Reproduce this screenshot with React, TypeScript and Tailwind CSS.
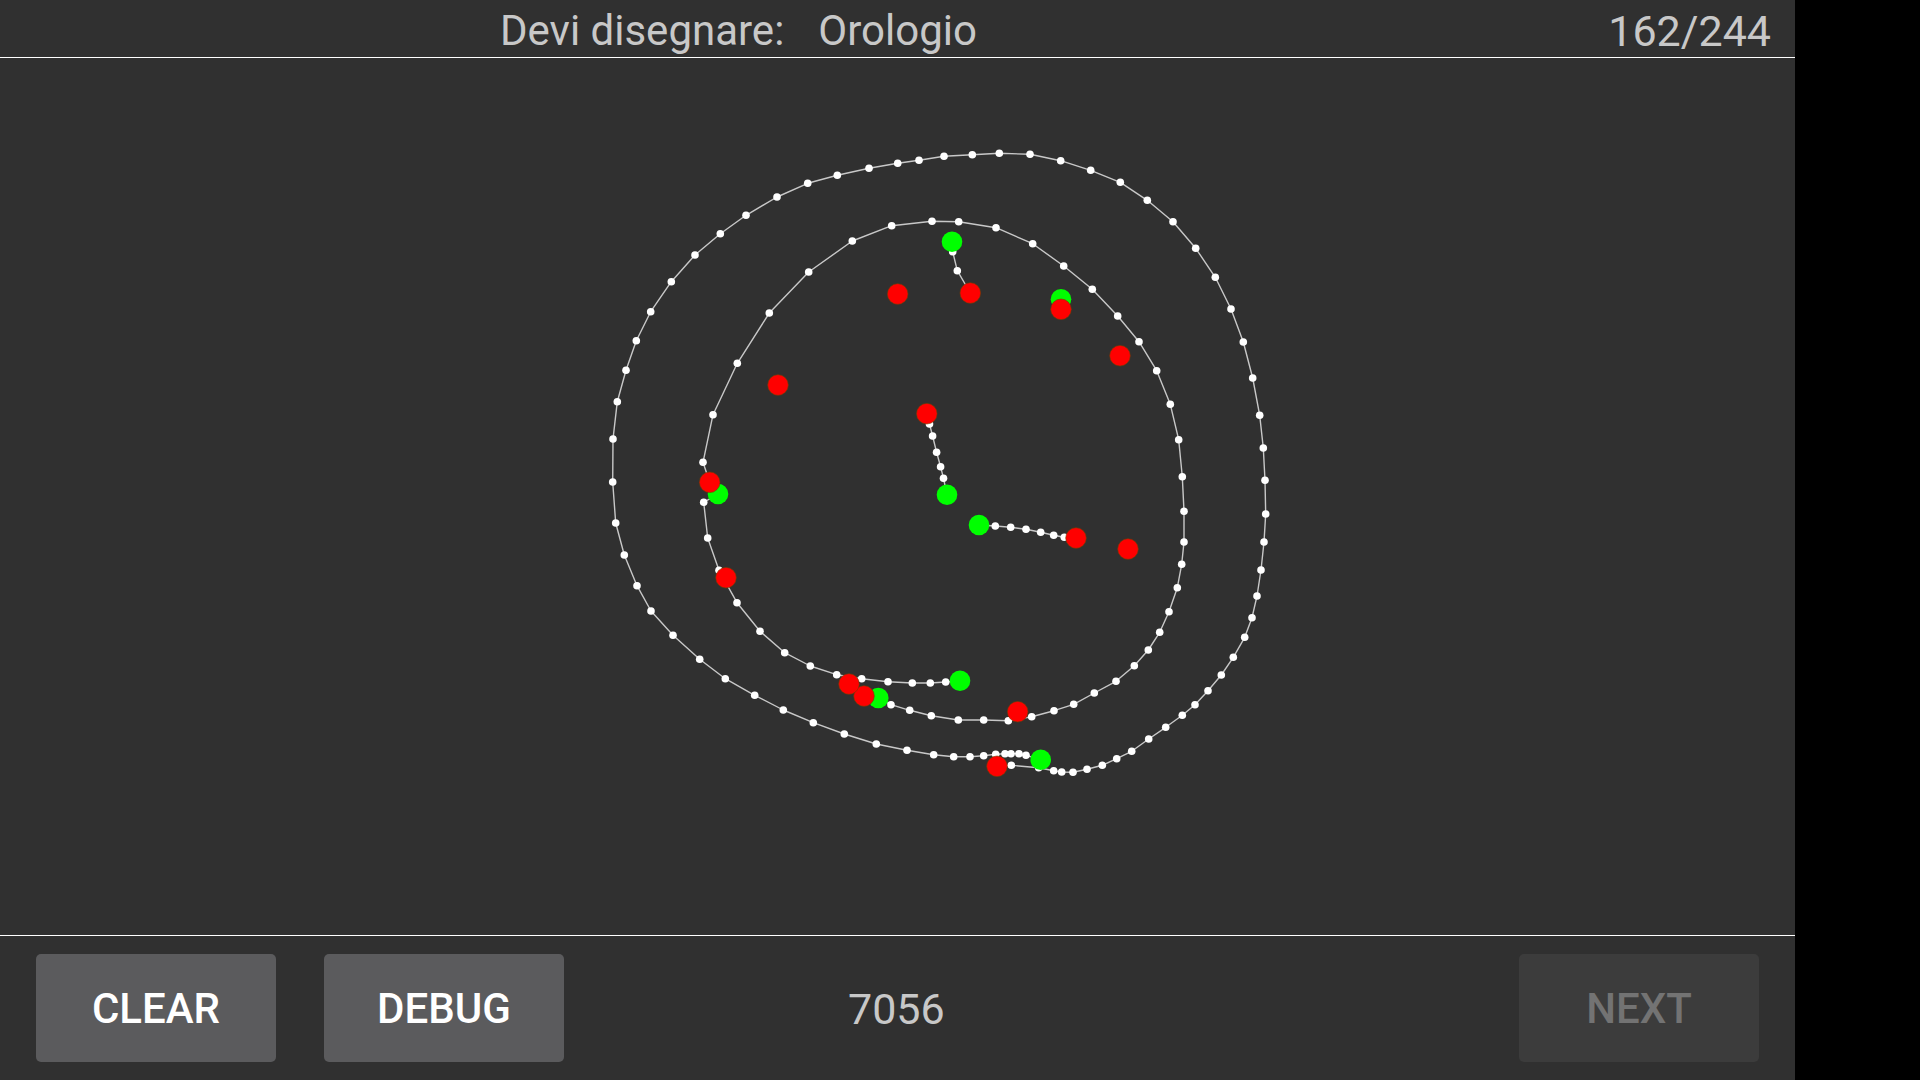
type Pt = [number, number]

// tracciati disegnati dall'utente, coordinate in pixel della pagina
const outer: Pt[] = [
  [1040.7, 759.7], [1026, 755.3], [1019, 753.7], [1011, 753.7], [1005, 753.7], [995.7, 754.3],
  [983.7, 755.7], [970, 756.7], [953.7, 756.7], [933.7, 754.7], [907, 750.3], [876.3, 744],
  [844.3, 734], [813.3, 722.7], [783.3, 710], [754.7, 695.3], [725.3, 678.7], [699.7, 659.3],
  [673, 635.3], [651, 611], [637, 585.7], [624.3, 555], [615.7, 523], [612.7, 482], [613, 439],
  [617.3, 401.7], [626, 370.3], [636.3, 340.7], [650.7, 311.7], [671.3, 281.7], [695, 255],
  [720.3, 233.7], [746, 215.3], [777, 197], [807.7, 183.3], [837.3, 175.3], [869, 168.3],
  [897.7, 163.3], [919, 160.3], [944, 156.3], [972.3, 154.7], [999.3, 153.3], [1030, 154.3],
  [1060.7, 160.7], [1090.7, 170.3], [1120.3, 182.3], [1147.3, 200.3], [1173, 221.7],
  [1195.7, 248.3], [1215.3, 277.3], [1231, 309], [1243.3, 342], [1252.7, 378], [1259.7, 415.3],
  [1263.3, 448], [1265, 480.3], [1265.7, 514], [1264, 542], [1261, 570], [1257, 596],
  [1252, 617.7], [1244.7, 637.3], [1233.3, 657.3], [1221.3, 675], [1208, 690.7], [1195, 704.7],
  [1182.3, 715.3], [1165.7, 727.3], [1148.7, 739], [1131.7, 751.3], [1116.7, 758.7],
  [1102.3, 765.3], [1087, 769.3], [1073, 772.3], [1061.7, 772], [1053.7, 770.7], [1038.7, 767.7],
  [1011.3, 765.3], [997, 766.3],
]

const innerA: Pt[] = [
  [878.3, 698], [891, 704.7], [909.7, 710.3], [931.3, 715.7], [958.3, 720], [983.7, 720],
  [1008.3, 720.7], [1031.7, 716.7], [1054, 710.7], [1073.7, 704.3], [1094.3, 693], [1116, 681.3],
  [1134.3, 665.7], [1148.3, 650], [1159.7, 632.3], [1169, 611.7], [1177.3, 587.7], [1181.7, 564.3],
  [1184, 542], [1184, 511.3], [1182.3, 476.7], [1178.7, 439.7], [1170.3, 404.3], [1156.7, 370.7],
  [1139, 341.7], [1117.7, 316], [1092.3, 289.3], [1063.7, 266], [1032.7, 243.7], [996, 227.7],
  [958.7, 221.7], [932, 221.3], [891.7, 225.7], [852.3, 241], [808.7, 272], [769.3, 313],
  [737.3, 363.3], [713, 414.7], [703, 462.3], [709.7, 482.3],
]

const innerB: Pt[] = [
  [718, 494], [703.7, 502.3], [707.7, 538], [719, 570.3], [737, 602.7], [760, 631.3],
  [784.7, 652.7], [810.3, 666], [836.7, 674.7], [861.7, 678.7], [888, 681.7], [912.3, 683],
  [930.3, 683], [945.7, 682], [960, 680.7],
]

const hourHand: Pt[] = [
  [926.8, 413.7], [929.5, 424], [932.6, 436], [936.6, 452.3], [940.6, 466.7], [943.5, 478.3], [947, 494.7],
]

const minuteHand: Pt[] = [
  [979, 525], [995.3, 526], [1010.7, 527.3], [1026, 529.3], [1040.7, 532.3], [1053.7, 535.3],
  [1064.3, 537.3], [1076, 538],
]

const tick: Pt[] = [[952, 241.7], [952.7, 251.7], [957.3, 270.7], [970.3, 293]]

const strokes = [outer, innerA, innerB, hourHand, minuteHand, tick]

const greens: Pt[] = [
  [1040.7, 759.7], [878.3, 698], [960, 680.7], [718, 494], [947, 494.7], [979, 525],
  [952, 241.7], [1061, 299.3],
]

const reds: Pt[] = [
  [997, 766.3], [864, 696], [849, 684], [709.7, 482.3], [926.8, 413.7], [1076, 538],
  [970.3, 293], [1061, 309.3], [897.7, 294], [778, 385], [1120, 355.7], [1128, 549],
  [726, 577.7], [1017.7, 711.7],
]

function Drawing() {
  return (
    <svg className="block" width={1795} height={877} viewBox="0 58 1795 877">
      {strokes.map((s, i) => (
        <polyline
          key={i}
          points={s.map((p) => p.join(',')).join(' ')}
          fill="none"
          stroke="#c8c8c8"
          strokeWidth={1.4}
          strokeLinejoin="round"
        />
      ))}
      {strokes.flatMap((s, i) =>
        s.map((p, j) => <circle key={`w${i}-${j}`} cx={p[0]} cy={p[1]} r={3.8} fill="#ffffff" />)
      )}
      {greens.map((p, i) => (
        <circle key={`g${i}`} cx={p[0]} cy={p[1]} r={10.3} fill="#00ff00" />
      ))}
      {reds.map((p, i) => (
        <circle key={`r${i}`} cx={p[0]} cy={p[1]} r={10.3} fill="#ff0000" stroke="#7a3a00" strokeWidth={0.6} />
      ))}
    </svg>
  )
}

function ActionButton({ label, disabled }: { label: string; disabled?: boolean }) {
  return (
    <button
      className={`w-[240px] h-[108px] rounded-[5px] flex items-center justify-center pt-[2px] text-[42px] font-medium leading-none ${
        disabled ? 'bg-[#3c3c3c] text-[#737373]' : 'bg-[#5b5b5d] text-white'
      }`}
    >
      {label}
    </button>
  )
}

export default function App() {
  return (
    <div className="w-[1920px] h-[1080px] bg-black flex overflow-hidden" style={{ fontFamily: 'Roboto, "Noto Sans", sans-serif' }}>
      <div className="w-[1795px] h-full bg-[#303030] flex flex-col">
        {/* header */}
        <div className="h-[57px] flex items-start justify-between pt-[10px] leading-none text-[#c8c8c8]">
          <div className="pl-[500px] flex text-[42px]">
            <span>Devi disegnare:</span>
            <span className="ml-[34px]">Orologio</span>
          </div>
          <span className="pr-[24px] text-[43px]">162/244</span>
        </div>
        <div className="h-px bg-white" />

        {/* canvas */}
        <div className="h-[877px]">
          <Drawing />
        </div>

        <div className="h-px bg-white" />
        {/* bottom bar */}
        <div className="h-[144px] flex items-center px-[36px]">
          <ActionButton label="CLEAR" />
          <div className="ml-[48px]">
            <ActionButton label="DEBUG" />
          </div>
          <span className="ml-[284px] pt-[3px] text-[43px] leading-none text-[#c8c8c8]">7056</span>
          <div className="ml-auto">
            <ActionButton label="NEXT" disabled />
          </div>
        </div>
      </div>
    </div>
  )
}
